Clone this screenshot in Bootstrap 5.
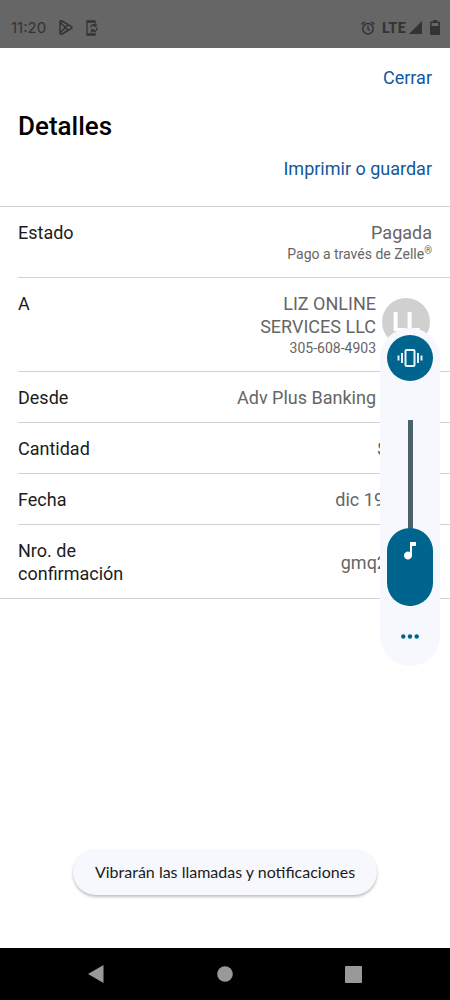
<!DOCTYPE html>
<html lang="es">
<head>
<meta charset="utf-8">
<meta name="viewport" content="width=device-width, initial-scale=1">
<title>Detalles</title>
<link href="https://cdn.jsdelivr.net/npm/bootstrap@5.3.0/dist/css/bootstrap.min.css" rel="stylesheet">
<style>
body { font-family: Roboto, sans-serif; font-size: 18px; line-height: 23px; color: #1c1c1c; background: #fff; }
.status-bar { height: 48px; padding: 7px 10px 0 11px; background: #666; color: #333; font-family: Inter, sans-serif; font-size: 15px; }
.status-lte { font-family: Lato, sans-serif; font-weight: 900; margin: 0 3px 0 7px; }
.status-icons { gap: 13px; margin-left: 13px; }
.page-link-blue { color: #1257a0; text-decoration: none; }
.page-head { padding: 18px 18px 26px; }
.page-title { font-size: 26px; line-height: 32px; font-weight: 500; color: #000; margin: 21px 0 15px; }
.detail-list { border-top: 1px solid #d2d2d2; border-bottom: 1px solid #d2d2d2; padding-left: 18px; }
.detail-row { padding: 14px 18px 13px 0; border-bottom: 1px solid #d2d2d2; }
.detail-row:last-child { border-bottom: 0; }
.detail-list dt { font-weight: 400; width: 120px; }
.detail-list dd { color: #666; }
.detail-list .value-inset { margin-right: 45px; }
.detail-note { display: block; font-size: 14px; line-height: 20px; }
.detail-note sup { font-size: 10px; line-height: 0; }
.avatar { width: 48px; height: 48px; margin: 6px 2px 0 6px; background: #d0d0d0; color: #fff; font-size: 26px; font-weight: 700; }
.volume { top: 328px; right: 10px; width: 60px; padding: 7px 7px 20px; border-radius: 30px; background: #f6f8fd; }
.ringer { width: 46px; height: 46px; background: #00658e; }
.slider-box { width: 46px; height: 186px; margin-top: 39px; }
.slider-box input { appearance: none; -webkit-appearance: none; position: absolute; top: 70px; left: -70px; width: 186px; height: 46px; margin: 0; background: linear-gradient(#4b626d, #4b626d) center / 100% 5px no-repeat; transform: rotate(-90deg); }
.slider-box input::-webkit-slider-thumb { -webkit-appearance: none; width: 78px; height: 46px; border-radius: 23px; background: #00658e; }
.slider-box svg { position: absolute; left: 17px; top: 122px; pointer-events: none; }
.more { height: 20px; margin-top: 20px; }
.notice { font-family: Lato, sans-serif; font-size: 16px; padding: 11px 22px 12px; margin-bottom: 53px; border-radius: 23px; background: #f6f8fd; box-shadow: 0 2px 3px rgba(0,0,0,.25); }
.nav-keys { height: 52px; background: #000; padding: 0 88px; }
.nav-keys button { width: 18px; }
</style>
</head>
<body>
<div class="d-flex flex-column min-vh-100 position-relative">
  <header class="status-bar d-flex align-items-center">
    <span>11:20</span>
    <span class="status-icons d-flex align-items-center">
      <svg width="14" height="15" viewBox="0 0 14 15" fill="none" stroke="#333" stroke-width="1.500" stroke-linejoin="round"><path d="M1 2Q1 0 3 1L12 6.300Q14 7.500 12 8.700L3 14Q1 15 1 13ZM1 2L9 10.300M1 13L9 4.700"/></svg>
      <svg width="12" height="16" viewBox="0 0 12 16" fill="none" stroke="#333" stroke-width="1.300"><path d="M9 3.500V1H1V15H9V12.500M1 2H9M1 13.800H9"/><path d="M4.600 7.600A3 3 0 0 1 9.800 5.600M11 7.600A3 3 0 0 1 6 10.400M10 3.500V6H7.500M5.600 12.500V10H8"/></svg>
    </span>
    <svg class="ms-auto" width="14" height="14" viewBox="0 0 14 14" fill="none" stroke="#333" stroke-width="1.500"><circle cx="7" cy="7.800" r="5.200"/><path d="M7 4.800V8L9 9.500M.6 3.400L3.800 .7M10.200 .7L13.400 3.400"/></svg>
    <span class="status-lte">LTE</span>
    <svg width="13" height="13" viewBox="0 0 13 13" fill="#333"><path d="M13 0V13H0Z"/></svg>
    <svg class="ms-2" width="10" height="15" viewBox="0 0 10 15"><path fill="#333" fill-rule="evenodd" d="M3 0H7V1.500H9Q10 1.500 10 2.500V14Q10 15 9 15H1Q0 15 0 14V2.500Q0 1.500 1 1.500H3ZM1.500 3V6H8.500V3Z"/></svg>
  </header>

  <main class="flex-grow-1 d-flex flex-column">
    <div class="page-head">
      <div class="text-end"><a class="page-link-blue" href="#">Cerrar</a></div>
      <h1 class="page-title">Detalles</h1>
      <div class="text-end"><a class="page-link-blue" href="#">Imprimir o guardar</a></div>
    </div>

    <dl class="detail-list mb-0">
      <div class="detail-row d-flex justify-content-between">
        <dt>Estado</dt>
        <dd class="mb-0 text-end">Pagada<span class="detail-note">Pago a través de Zelle<sup>®</sup></span></dd>
      </div>
      <div class="detail-row d-flex justify-content-between">
        <dt>A</dt>
        <dd class="mb-0 text-end d-flex align-items-start">
          <div>LIZ ONLINE<br>SERVICES LLC<span class="detail-note">305-608-4903</span></div>
          <span class="avatar rounded-circle d-flex align-items-center justify-content-center">LL</span>
        </dd>
      </div>
      <div class="detail-row d-flex justify-content-between">
        <dt>Desde</dt><dd class="mb-0 me-5 pe-2">Adv Plus Banking</dd>
      </div>
      <div class="detail-row d-flex justify-content-between">
        <dt>Cantidad</dt><dd class="mb-0 value-inset">$</dd>
      </div>
      <div class="detail-row d-flex justify-content-between">
        <dt>Fecha</dt><dd class="mb-0 me-5">dic 19</dd>
      </div>
      <div class="detail-row d-flex justify-content-between align-items-center">
        <dt>Nro. de confirmación</dt><dd class="mb-0 value-inset">gmq2</dd>
      </div>
    </dl>

    <div class="notice mt-auto mx-auto" role="status">Vibrarán las llamadas y notificaciones</div>
  </main>

  <aside class="volume position-absolute d-flex flex-column align-items-center">
    <button type="button" class="ringer btn p-0 border-0 rounded-circle d-flex align-items-center justify-content-center" aria-label="Vibrar">
      <svg width="26" height="18" viewBox="0 0 26 18" fill="none" stroke="#e8f4fb" stroke-width="2"><rect x="8.500" y="1" width="9" height="16" rx="1"/><path d="M5 4V14M21 4V14M1.500 6.500V11.500M24.500 6.500V11.500"/></svg>
    </button>
    <div class="slider-box position-relative">
      <input type="range" min="0" max="100" value="0" aria-label="Volumen">
      <svg width="12" height="18" viewBox="0 0 12 18" fill="#fff"><path d="M6 0H12V4H8V13.500A4 4 0 1 1 6 10Z"/></svg>
    </div>
    <button type="button" class="more btn p-0 border-0 d-flex align-items-center" aria-label="Más opciones">
      <svg width="18" height="5" viewBox="0 0 18 5" fill="#00658e"><circle cx="2.300" cy="2.500" r="2.200"/><circle cx="9" cy="2.500" r="2.200"/><circle cx="15.700" cy="2.500" r="2.200"/></svg>
    </button>
  </aside>

  <nav class="nav-keys d-flex align-items-center justify-content-between" aria-label="Sistema">
    <button type="button" class="btn p-0 border-0 d-flex" aria-label="Atrás"><svg width="16" height="18" viewBox="0 0 16 18" fill="#999"><path d="M15.500 0V18L0 9Z"/></svg></button>
    <button type="button" class="btn p-0 border-0 d-flex justify-content-center" aria-label="Inicio"><svg width="16" height="16" viewBox="0 0 16 16" fill="#999"><circle cx="8" cy="8" r="7.800"/></svg></button>
    <button type="button" class="btn p-0 border-0 d-flex justify-content-end" aria-label="Recientes"><svg width="17" height="17" viewBox="0 0 17 17" fill="#999"><rect width="17" height="17" rx="1"/></svg></button>
  </nav>
</div>
<script src="https://cdn.jsdelivr.net/npm/bootstrap@5.3.0/dist/js/bootstrap.bundle.min.js"></script>
</body>
</html>
